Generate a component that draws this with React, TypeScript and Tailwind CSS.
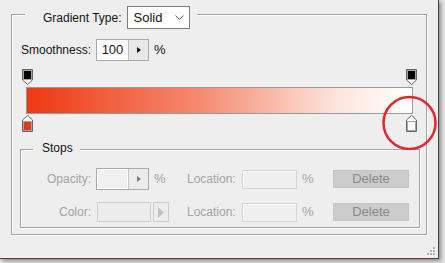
import React from 'react'

function TopStop() {
  return (
    <svg width="11" height="16" viewBox="0 0 11 16" className="block">
      <path d="M0.5 0.5H10.5V11L5.5 15.5L0.5 11Z" fill="#ffffff" stroke="#666666" />
      <rect x="1" y="1" width="9" height="10" fill="#a4a4a4" />
      <rect x="2" y="2" width="7" height="8" fill="#000000" />
    </svg>
  )
}

function BottomStop({ color }: { color: string }) {
  return (
    <svg width="11" height="17" viewBox="0 0 11 17" className="block">
      <path d="M5.5 0.5L10.5 5V16.5H0.5V5Z" fill="#ffffff" stroke="#666666" />
      <rect x="1" y="6" width="9" height="10" fill="#a4a4a4" />
      <rect x="2" y="7" width="7" height="8" fill={color} />
    </svg>
  )
}

function SmallArrow({ color }: { color: string }) {
  return (
    <svg width="4" height="6" viewBox="0 0 4 6">
      <path d="M0 0L4 3L0 6Z" fill={color} />
    </svg>
  )
}

export default function App() {
  const font = { fontFamily: '"Liberation Sans", Arial, sans-serif' }

  return (
    <div className="w-[445px] h-[263px] bg-[#e4e4e4] overflow-hidden" style={font}>
      <div className="relative w-[439px] h-[259px] bg-[#eeeeee] border-r border-b border-r-[#444444] border-b-[#5c3a2e] shadow-[2px_2px_4px_rgba(0,0,0,0.4)] pt-[14px] pl-[11px] text-[12px] text-[#141414]">
        {/* outer group */}
        <div className="w-[416px] h-[221px] border border-[#a3a3a3] shadow-[1px_1px_0_#ffffff,inset_1px_1px_0_#ffffff] flex flex-col">
          <div className="-mt-[9px] ml-[13px] self-start bg-[#eeeeee] pl-[18px] pr-[7px] flex items-center gap-[5px] h-[23px]">
            <span>Gradient Type:</span>
            <div className="w-[63px] h-[23px] border border-[#7c7c7c] bg-white flex items-center justify-between pl-[6px] pr-[5px]">
              <span className="text-[13px]">Solid</span>
              <svg width="9" height="6" viewBox="0 0 9 6">
                <path d="M0.5 0.5L4.5 4.5L8.5 0.5" fill="none" stroke="#555555" strokeWidth="1" />
              </svg>
            </div>
          </div>

          <div className="mt-[10px] pl-[9px] flex items-center h-[22px]">
            <span className="w-[75px]">Smoothness:</span>
            <div className="w-[53px] h-[22px] border border-[#a9a9a9] flex">
              <div className="w-[31px] bg-white flex items-center justify-center text-[13px]">100</div>
              <div className="flex-1 border-l border-[#bdbdbd] bg-[#e9e9e9] flex items-center justify-center">
                <SmallArrow color="#111111" />
              </div>
            </div>
            <span className="ml-[5px] text-[13px]">%</span>
          </div>

          {/* gradient editor */}
          <div className="mt-[8px] pl-[10px] w-[405px] flex justify-between">
            <TopStop />
            <TopStop />
          </div>
          <div className="mt-[2px] ml-[14px] w-[387px] h-[27px] border border-[#999999] bg-[linear-gradient(to_right,#ef3812,#f58a70_45%,#fde3dc_80%,#ffffff)]" />
          <div className="mt-[1px] pl-[10px] w-[405px] flex justify-between">
            <BottomStop color="#e53a1a" />
            <BottomStop color="#ffffff" />
          </div>

          {/* stops group */}
          <div className="mt-[17px] ml-[8px] w-[400px] h-[79px] border border-[#a3a3a3] shadow-[1px_1px_0_#ffffff,inset_1px_1px_0_#ffffff] flex flex-col text-[#a3a3a3]">
            <div className="-mt-[10px] ml-[12px] self-start bg-[#eeeeee] pl-[9px] pr-[7px] h-[16px] leading-[16px] text-[#141414]">
              Stops
            </div>

            <div className="mt-[12px] flex items-center h-[22px]">
              <span className="w-[75px] text-right pr-[5px]">Opacity:</span>
              <div className="w-[53px] h-[22px] border border-[#ababab] flex">
                <div className="w-[31px] bg-[#f0f0f0] border border-white" />
                <div className="flex-1 border-l border-[#c6c6c6] bg-[#ececec] flex items-center justify-center">
                  <SmallArrow color="#7a7a7a" />
                </div>
              </div>
              <span className="w-[38px] pl-[5px] text-[13px]">%</span>
              <span className="w-[55px]">Location:</span>
              <div className="w-[55px] h-[19px] border border-[#d4d4d4] bg-[#efefef] shadow-[inset_1px_1px_0_#ffffff]" />
              <span className="w-[36px] pl-[5px] text-[13px]">%</span>
              <div className="w-[76px] h-[18px] bg-[#cccccc] border border-[#c4c4c4] flex items-center justify-center text-[#8a8a8a] text-[13px]">
                Delete
              </div>
            </div>

            <div className="mt-[11px] flex items-center h-[22px]">
              <span className="w-[75px] text-right pr-[5px]">Color:</span>
              <div className="ml-[1px] w-[54px] h-[20px] border border-[#cdcdcd] bg-[#ececec]" />
              <div className="ml-[2px] w-[16px] h-[20px] border border-[#cdcdcd] bg-[#ececec] flex items-center justify-center">
                <svg width="6" height="11" viewBox="0 0 6 11">
                  <path d="M0 0L6 5.5L0 11Z" fill="#c2c2c2" />
                </svg>
              </div>
              <span className="w-[18px]" />
              <span className="w-[55px]">Location:</span>
              <div className="w-[55px] h-[19px] border border-[#d4d4d4] bg-[#efefef] shadow-[inset_1px_1px_0_#ffffff]" />
              <span className="w-[36px] pl-[5px] text-[13px]">%</span>
              <div className="w-[76px] h-[18px] bg-[#cccccc] border border-[#c4c4c4] flex items-center justify-center text-[#8a8a8a] text-[13px]">
                Delete
              </div>
            </div>
          </div>
        </div>

        {/* red annotation circle */}
        <svg className="absolute left-[382px] top-[95px]" width="56" height="56" viewBox="0 0 56 56">
          <circle cx="27.5" cy="28" r="26" fill="none" stroke="#e5242b" strokeWidth="2.5" />
        </svg>

        {/* resize grip */}
        <svg className="absolute right-[2px] bottom-[2px]" width="10" height="10" viewBox="0 0 10 10">
          <rect x="7" y="1" width="2" height="2" fill="#b5b5b5" />
          <rect x="4" y="4" width="2" height="2" fill="#b5b5b5" />
          <rect x="7" y="4" width="2" height="2" fill="#b5b5b5" />
          <rect x="1" y="7" width="2" height="2" fill="#b5b5b5" />
          <rect x="4" y="7" width="2" height="2" fill="#b5b5b5" />
          <rect x="7" y="7" width="2" height="2" fill="#b5b5b5" />
        </svg>
      </div>
    </div>
  )
}
